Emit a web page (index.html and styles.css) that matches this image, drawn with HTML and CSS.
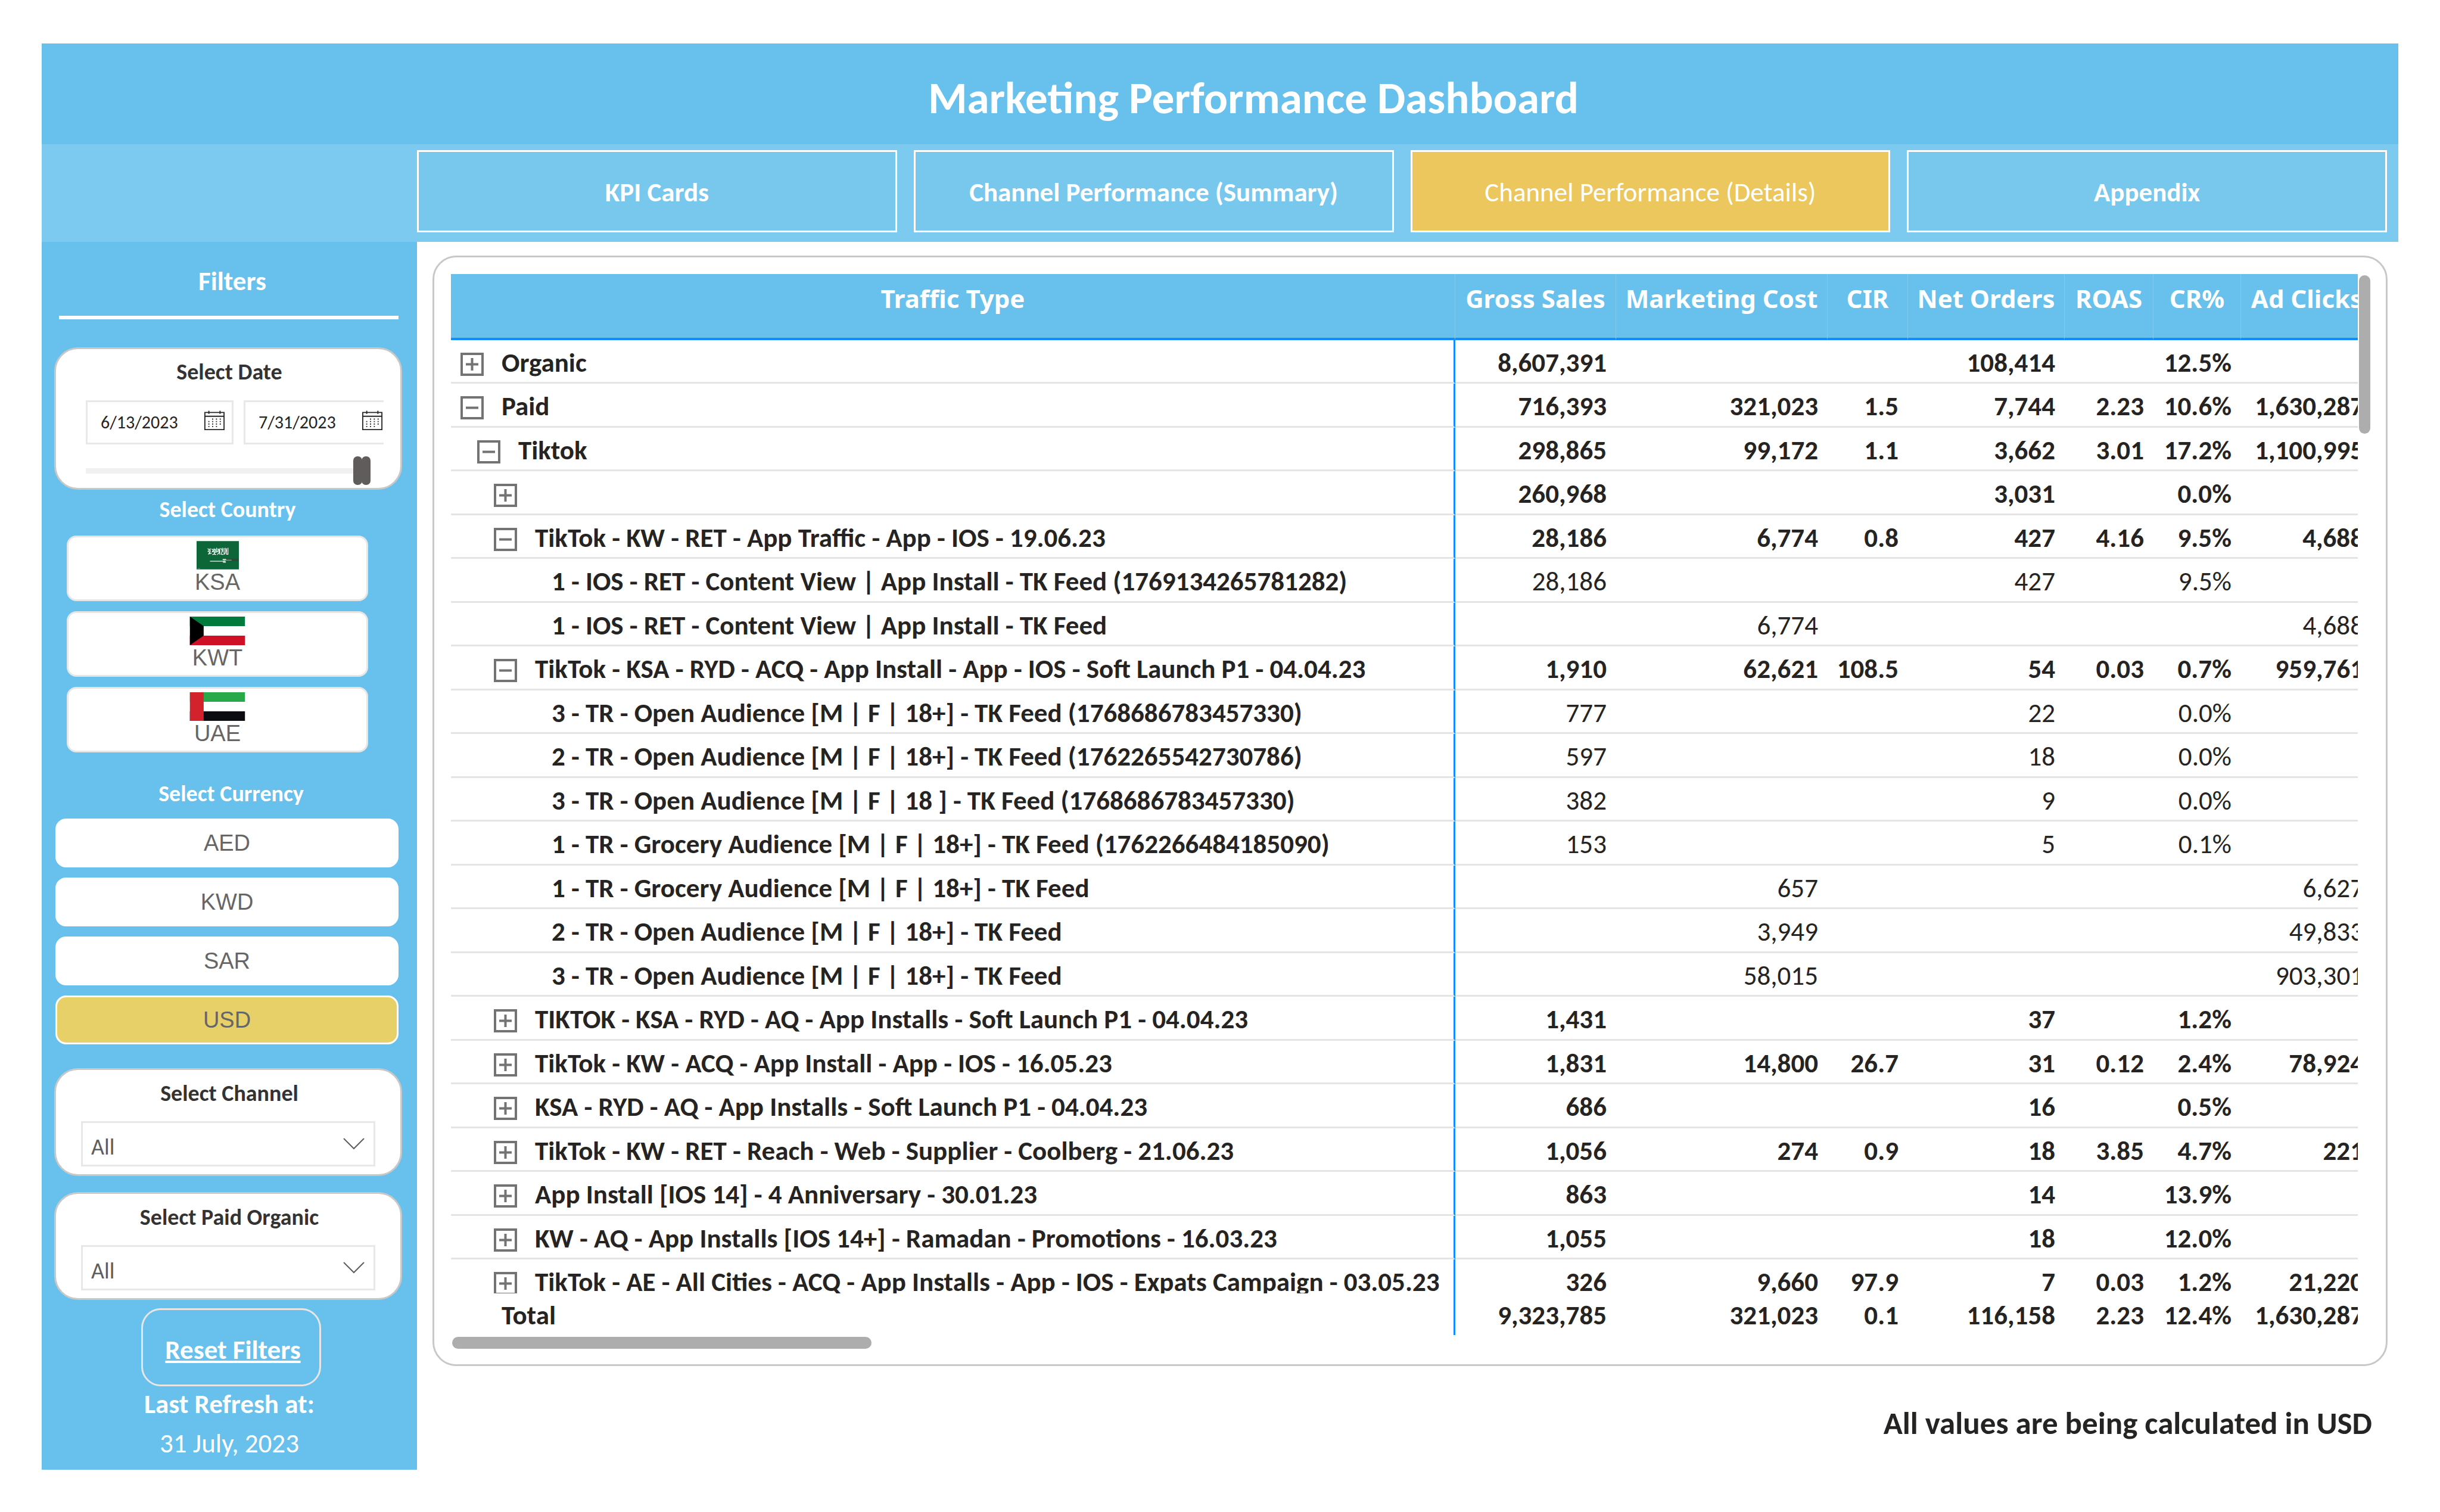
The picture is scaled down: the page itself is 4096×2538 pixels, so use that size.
FILE: index.html
```html
<!DOCTYPE html>
<html lang="en">
<head>
<meta charset="utf-8">
<title>Marketing Performance Dashboard</title>
<link rel="stylesheet" href="styles.css">
</head>
<body>
<svg class="defs" aria-hidden="true">
  <symbol id="plus" viewBox="0 0 39 39"><path d="M2 2h35v35H2zM9 19.500h21M19.500 9v21" fill="none" stroke="#737373" stroke-width="4"/></symbol>
  <symbol id="minus" viewBox="0 0 39 39"><path d="M2 2h35v35H2zM9 19.500h21" fill="none" stroke="#737373" stroke-width="4"/></symbol>
  <symbol id="calendar" viewBox="0 0 90 88">
    <path d="M2 9h86v77H2zM2 26h86M20 1v14M70 1v14" fill="none" stroke="#252423" stroke-width="5"/>
    <path d="M37 36v5M54 36v5M71 36v5M20 47v5M37 47v5M54 47v5M71 47v5M20 58v5M37 58v5M54 58v5M71 58v5M20 69v5M37 69v5M54 69v5" stroke="#252423" stroke-width="5"/>
  </symbol>
  <symbol id="chevron" viewBox="0 0 36 20"><path d="M1 1l17 17L35 1" fill="none" stroke="#605e5c" stroke-width="2"/></symbol>
</svg>

<div class="dashboard">
  <header class="title-bar"><h1>Marketing Performance Dashboard</h1></header>

  <nav class="tabs" aria-label="Pages">
    <a class="tab" href="#kpi">KPI Cards</a>
    <a class="tab" href="#summary">Channel Performance (Summary)</a>
    <a class="tab tab-active" href="#details" aria-current="page">Channel Performance (Details)</a>
    <a class="tab" href="#appendix">Appendix</a>
  </nav>

  <div class="columns">
    <aside class="sidebar">
      <h2 class="filters-title">Filters</h2>
      <hr class="rule">

      <section class="card date-card">
        <h3 class="label">Select Date</h3>
        <div class="dates">
          <label class="date"><input type="text" value="6/13/2023" aria-label="Start date"><svg class="cal"><use href="#calendar"/></svg></label>
          <label class="date"><input type="text" value="7/31/2023" aria-label="End date"><svg class="cal"><use href="#calendar"/></svg></label>
        </div>
        <div class="slider">
          <input type="range" class="range" min="0" max="100" value="97" aria-label="Range start">
          <input type="range" class="range range-end" min="0" max="100" value="100" aria-label="Range end">
        </div>
      </section>

      <h3 class="label label-light country-label">Select Country</h3>
      <div class="countries">
        <button class="country" type="button">
          <svg width="71" height="48" viewBox="0 0 237 159" aria-hidden="true">
            <path fill="#0c6637" d="M0 0h237v159H0z"/>
            <path d="M62 42l10 8-8 8 12 4-10 12M76 40v18l-8 14 16-4M84 44l10 6-6 10 12-2v16l-12 2M98 40v12l8-6v16l-10 12 14 2M112 38v24l8-4v-14l6 4v18l-10 10M130 40v36M136 40l8 14-6 20 12 2M146 38v22M154 40v36M160 38l4 16-6 20M168 40v36M176 38v36h-10" fill="none" stroke="#fff" stroke-width="4"/>
            <path d="M75 113h86" stroke="#fff" stroke-width="4"/>
            <path d="M146 100h20v6h-20zM148 114h16v7h-16z" fill="#dce8e0"/>
            <path d="M166 98h71v14h-71z" fill="#2c4a3a"/>
            <path d="M150 107h46" stroke="#b4c8bc" stroke-width="3"/>
            <path d="M5 154h16" stroke="#86b097" stroke-width="2"/>
          </svg>
          <span>KSA</span>
        </button>
        <button class="country" type="button">
          <svg width="94" height="48" viewBox="0 0 312 162" aria-hidden="true">
            <path fill="#007a3d" d="M0 0h312v54H0z"/><path fill="#fff" d="M0 54h312v54H0z"/><path fill="#ce1126" d="M0 108h312v54H0z"/><path d="M0 0l78 54v54L0 162z"/>
          </svg>
          <span>KWT</span>
        </button>
        <button class="country" type="button">
          <svg width="94" height="48" viewBox="0 0 312 162" aria-hidden="true">
            <path fill="#27a949" d="M0 0h312v54H0z"/><path fill="#fff" d="M0 54h312v54H0z"/><path fill="#0b0c11" d="M0 108h312v54H0z"/><path fill="#d2232c" d="M0 0h78v162H0z"/>
          </svg>
          <span>UAE</span>
        </button>
      </div>

      <h3 class="label label-light currency-label">Select Currency</h3>
      <div class="currencies">
        <button class="currency" type="button">AED</button>
        <button class="currency" type="button">KWD</button>
        <button class="currency" type="button">SAR</button>
        <button class="currency currency-active" type="button" aria-pressed="true">USD</button>
      </div>

      <div class="card select-card">
        <label class="label" for="channel">Select Channel</label>
        <div class="select-box">
          <select id="channel"><option>All</option></select>
          <svg class="chevron" aria-hidden="true"><use href="#chevron"/></svg>
        </div>
      </div>
      <div class="card select-card">
        <label class="label" for="paid">Select Paid Organic</label>
        <div class="select-box">
          <select id="paid"><option>All</option></select>
          <svg class="chevron" aria-hidden="true"><use href="#chevron"/></svg>
        </div>
      </div>

      <button class="reset" type="button">Reset Filters</button>
      <p class="refresh"><strong>Last Refresh at:</strong><time datetime="2023-07-31">31 July, 2023</time></p>
    </aside>

    <main class="main">
      <section class="panel">
        <div class="matrix">
          <div class="viewport">
            <table class="grid">
              <colgroup><col><col class="c-sales"><col class="c-cost"><col class="c-cir"><col class="c-orders"><col class="c-roas"><col class="c-cr"><col class="c-clicks"></colgroup>
              <thead><tr><th>Traffic Type</th><th>Gross Sales</th><th>Marketing Cost</th><th>CIR</th><th>Net Orders</th><th>ROAS</th><th>CR%</th><th>Ad Clicks</th></tr></thead>
              <tbody id="rows"></tbody>
            </table>
          </div>
          <div class="viewport-total">
            <table class="grid">
              <colgroup><col><col class="c-sales"><col class="c-cost"><col class="c-cir"><col class="c-orders"><col class="c-roas"><col class="c-cr"><col class="c-clicks"></colgroup>
              <tbody><tr class="total"><th scope="row">Total</th><td>9,323,785</td><td>321,023</td><td>0.1</td><td>116,158</td><td>2.23</td><td>12.4%</td><td>1,630,287</td></tr></tbody>
            </table>
          </div>
          <div class="thumb-x"></div>
        </div>
        <div class="thumb-y"></div>
      </section>
      <p class="note">All values are being calculated in USD</p>
    </main>
  </div>
</div>
<script src="rows.js"></script>
</body>
</html>
```
FILE: rows.js
```javascript
// Each row: level, toggle state, name, then the seven measures.
const rows = [
  [0, "plus", "Organic", "8,607,391", "", "", "108,414", "", "12.5%", ""],
  [0, "minus", "Paid", "716,393", "321,023", "1.5", "7,744", "2.23", "10.6%", "1,630,287"],
  [1, "minus", "Tiktok", "298,865", "99,172", "1.1", "3,662", "3.01", "17.2%", "1,100,995"],
  [2, "plus", "", "260,968", "", "", "3,031", "", "0.0%", ""],
  [2, "minus", "TikTok - KW - RET - App Traffic - App - IOS - 19.06.23", "28,186", "6,774", "0.8", "427", "4.16", "9.5%", "4,688"],
  [3, "", "1 - IOS - RET - Content View | App Install - TK Feed (1769134265781282)", "28,186", "", "", "427", "", "9.5%", ""],
  [3, "", "1 - IOS - RET - Content View | App Install - TK Feed", "", "6,774", "", "", "", "", "4,688"],
  [2, "minus", "TikTok - KSA - RYD - ACQ - App Install - App - IOS - Soft Launch P1 - 04.04.23", "1,910", "62,621", "108.5", "54", "0.03", "0.7%", "959,761"],
  [3, "", "3 - TR - Open Audience [M | F | 18+] - TK Feed (1768686783457330)", "777", "", "", "22", "", "0.0%", ""],
  [3, "", "2 - TR - Open Audience [M | F | 18+] - TK Feed (1762265542730786)", "597", "", "", "18", "", "0.0%", ""],
  [3, "", "3 - TR - Open Audience [M | F | 18 ] - TK Feed (1768686783457330)", "382", "", "", "9", "", "0.0%", ""],
  [3, "", "1 - TR - Grocery Audience [M | F | 18+] - TK Feed (1762266484185090)", "153", "", "", "5", "", "0.1%", ""],
  [3, "", "1 - TR - Grocery Audience [M | F | 18+] - TK Feed", "", "657", "", "", "", "", "6,627"],
  [3, "", "2 - TR - Open Audience [M | F | 18+] - TK Feed", "", "3,949", "", "", "", "", "49,833"],
  [3, "", "3 - TR - Open Audience [M | F | 18+] - TK Feed", "", "58,015", "", "", "", "", "903,301"],
  [2, "plus", "TIKTOK - KSA - RYD - AQ - App Installs - Soft Launch P1 - 04.04.23", "1,431", "", "", "37", "", "1.2%", ""],
  [2, "plus", "TikTok - KW - ACQ - App Install - App - IOS - 16.05.23", "1,831", "14,800", "26.7", "31", "0.12", "2.4%", "78,924"],
  [2, "plus", "KSA - RYD - AQ - App Installs - Soft Launch P1 - 04.04.23", "686", "", "", "16", "", "0.5%", ""],
  [2, "plus", "TikTok - KW - RET - Reach - Web - Supplier - Coolberg - 21.06.23", "1,056", "274", "0.9", "18", "3.85", "4.7%", "221"],
  [2, "plus", "App Install [IOS 14] - 4 Anniversary - 30.01.23", "863", "", "", "14", "", "13.9%", ""],
  [2, "plus", "KW - AQ - App Installs [IOS 14+] - Ramadan - Promotions - 16.03.23", "1,055", "", "", "18", "", "12.0%", ""],
  [2, "plus", "TikTok - AE - All Cities - ACQ - App Installs - App - IOS - Expats Campaign - 03.05.23", "326", "9,660", "97.9", "7", "0.03", "1.2%", "21,220"]
];

document.getElementById("rows").innerHTML = rows.map(([level, state, name, ...cells]) => {
  const toggle = state
    ? `<button class="toggle" type="button" aria-label="${state === "plus" ? "Expand" : "Collapse"}"><svg><use href="#${state}"/></svg></button>`
    : "";
  return `<tr class="${state ? "group" : "leaf"}"><th scope="row"><div class="node level-${level}">${toggle}<span>${name}</span></div></th>${cells.map(c => `<td>${c}</td>`).join("")}</tr>`;
}).join("");
```
FILE: styles.css
```css
* { box-sizing: border-box; }

body {
  margin: 0;
  padding: 73px 70px 70px;
  background: #fff;
  color: #252423;
  font: 400 45px/60px Carlito, Calibri, Lato, sans-serif;
}

h1, h2, h3, p { margin: 0; }
button, input, select { font: inherit; color: inherit; }
.defs { display: none; }

.title-bar {
  height: 169px;
  padding: 19px 0 0 112px;
  background: #67c1ec;
  color: #fff;
  text-align: center;
}
.title-bar h1 { font-size: 75px; line-height: 145px; }

.tabs {
  display: grid;
  grid-template-columns: repeat(4, 1fr);
  gap: 28px;
  padding: 10px 19px 16px 630px;
  background: #7ccaef;
}
.tab {
  display: flex;
  align-items: center;
  justify-content: center;
  height: 138px;
  padding-top: 4px;
  border: 3px solid #fff;
  background: #78c7ed;
  color: #fff;
  font-weight: 700;
  text-decoration: none;
}
.tab-active { background: #ebc75e; font-weight: 400; }

.columns { display: grid; grid-template-columns: 630px 1fr; }

/* Sidebar */
.sidebar { padding: 36px 0 14px; background: #67c1ec; }
.filters-title { padding-left: 10px; color: #fff; font-size: 45px; text-align: center; }
.rule { height: 6px; margin: 28px 31px 0 29px; border: 0; background: #fff; }

.card {
  margin: 0 25px 0 21px;
  padding: 18px 42px 13px;
  border: 3px solid #c8c8c8;
  border-radius: 40px;
  background: #fff;
}
.label {
  display: block;
  color: #333;
  font-size: 38px;
  font-weight: 700;
  line-height: 44px;
  text-align: center;
}
.label-light { color: #fff; }

.date-card { margin-top: 47px; padding: 16px 28px 5px 50px; }
.date-card .label { padding-right: 18px; }
.dates { display: flex; gap: 17px; margin-top: 26px; overflow: hidden; }
.date {
  display: flex;
  flex: none;
  align-items: center;
  width: 248px;
  height: 74px;
  padding: 0 12px 0 22px;
  border: 3px solid #e8e8e8;
}
.date input {
  flex: 1;
  min-width: 0;
  padding: 0;
  border: 0;
  background: none;
  font-size: 30px;
}
.cal { flex: none; width: 34px; height: 33px; margin-bottom: 7px; }

.slider { display: grid; width: 478px; height: 48px; margin-top: 20px; }
.range {
  grid-area: 1 / 1;
  width: 100%;
  height: 48px;
  margin: 0;
  appearance: none;
  background: linear-gradient(#f0f0f0, #f0f0f0) center / 100% 9px no-repeat;
}
.range-end { background: none; }
.range::-webkit-slider-thumb {
  appearance: none;
  width: 15px;
  height: 48px;
  border-radius: 7px;
  background: #605c5b;
}

.country-label { margin: 11px 0 22px; padding-right: 6px; }
.countries { display: grid; gap: 17px; margin: 0 82px 0 42px; }
.country {
  display: flex;
  flex-direction: column;
  align-items: center;
  gap: 1px;
  height: 110px;
  padding: 6px 0 0;
  border: 3px solid #e6e6e6;
  border-radius: 16px;
  background: #fff;
  color: #666;
  font: 38px/40px "Liberation Sans", Arial, sans-serif;
}
.country svg { flex: none; }

.currency-label { margin: 47px 0 20px; padding-left: 6px; }
.currencies { display: grid; gap: 17px; margin: 0 31px 0 23px; }
.currency {
  height: 82px;
  padding: 0;
  border: 3px solid #fff;
  border-radius: 18px;
  background: #fff;
  color: #666;
  font: 38px/40px "Liberation Sans", Arial, sans-serif;
}
.currency-active { background: #e6d067; }

.select-card { margin-top: 40px; }
.select-card + .select-card { margin-top: 27px; }
.select-card .label { margin-top: -1px; padding-left: 4px; }
.select-box { display: grid; align-items: center; margin-top: 25px; }
.select-box select {
  grid-area: 1 / 1;
  width: 100%;
  height: 76px;
  padding: 10px 14px 0;
  border: 3px solid #e8e8e8;
  border-radius: 0;
  appearance: none;
  background: none;
  color: #605e5c;
  font-size: 38px;
}
.chevron { grid-area: 1 / 1; justify-self: end; width: 36px; height: 20px; margin-right: 18px; pointer-events: none; }

.reset {
  display: block;
  width: 302px;
  height: 131px;
  margin: 14px 161px 0 167px;
  padding: 9px 0 0 6px;
  border: 3px solid #e6e6e6;
  border-radius: 33px;
  background: none;
  color: #fff;
  font-weight: 700;
  text-decoration: underline;
}
.refresh { display: grid; gap: 6px; color: #fff; text-align: center; }

/* Matrix */
.main { padding: 23px 18px 0 26px; }
.panel {
  display: grid;
  grid-template-columns: 1fr 19px;
  gap: 2px;
  padding: 28px 26px 26px 28px;
  border: 3px solid #c8c8c8;
  border-radius: 40px;
}
.matrix { min-width: 0; }
.viewport { height: 1711px; overflow: hidden; }
.viewport-total { overflow: hidden; }

.grid { width: calc(100% + 26px); table-layout: fixed; border-collapse: separate; border-spacing: 0; }
.c-sales { width: 270px; }
.c-cost { width: 355px; }
.c-cir { width: 135px; }
.c-orders { width: 263px; }
.c-roas { width: 149px; }
.c-cr { width: 147px; }
.c-clicks { width: 222px; }

.grid th, .grid td { padding: 0; vertical-align: top; white-space: nowrap; }
.grid thead th {
  height: 111px;
  padding-top: 11px;
  border-right: 1px solid #7fcaf0;
  border-bottom: 4px solid #118dff;
  background: #67c1ec;
  color: #fff;
  font: 700 42px/60px "Noto Sans", "Open Sans", sans-serif;
  text-align: center;
}
.grid tbody tr { height: 73px; }
.grid tbody tr:nth-child(even) { height: 74px; }
.grid tbody th, .grid tbody td { border-bottom: 3px solid #e4e4e4; line-height: 58px; }
.grid tbody th { border-right: 3px solid #118dff; text-align: left; }
.grid tbody td { padding: 9px 16px 0 0; text-align: right; }
.group td, .total td { font-weight: 700; }

.node { display: flex; gap: 30px; padding: 9px 0 0 16px; }
.level-1 { padding-left: 44px; }
.level-2 { padding-left: 72px; }
.level-3 { padding-left: 169px; }
.toggle { flex: none; width: 39px; height: 39px; margin-top: 12px; padding: 0; border: 0; background: none; }
.toggle svg { display: block; width: 39px; height: 39px; }

.grid .total { height: 70px; }
.grid .total th, .grid .total td { padding-top: 8px; border-bottom: 0; }
.grid .total th { padding-left: 85px; }

.thumb-x { width: 22%; height: 20px; margin: 3px 0 0 2px; border-radius: 10px; background: #aeadad; }
.thumb-y { height: 266px; margin-top: 2px; border-radius: 10px; background: #aeadad; }

.note { margin-top: 66px; padding-right: 26px; font-size: 53px; font-weight: 700; text-align: right; }
```
